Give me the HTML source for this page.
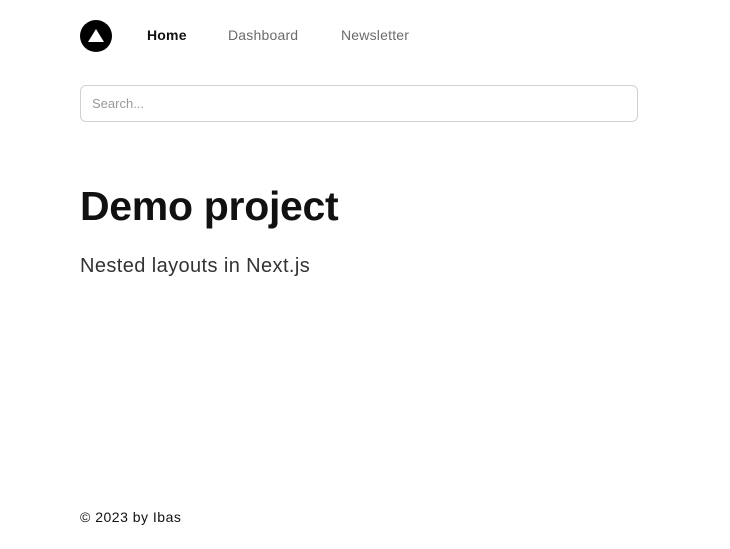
<!DOCTYPE html><html><head><style>
body{margin:0;width:730px;height:549px;background:#fff;font-family:"Liberation Sans",sans-serif;position:relative;overflow:hidden}
.logo{position:absolute;left:80px;top:20px;width:32px;height:32px;border-radius:50%;background:#000}
.nav{position:absolute;top:27px;font-size:14px;color:#6b6b6b;letter-spacing:0.2px}
.search{position:absolute;left:80px;top:85px;width:556px;height:35px;border:1px solid #d1d1d1;border-radius:6px;box-sizing:content-box}
.search span{position:absolute;left:11px;top:10px;font-size:13px;color:#999}
h1{position:absolute;left:80px;top:183px;margin:0;font-size:41px;font-weight:bold;color:#111;letter-spacing:-0.3px}
.sub{position:absolute;left:80px;top:255px;font-size:20px;color:#333;letter-spacing:0.4px}
.foot{position:absolute;left:80px;top:509px;font-size:14px;color:#111;letter-spacing:0.5px}
</style></head><body>
<div class="logo"><svg width="32" height="32"><polygon points="16,9 24,22 8,22" fill="#fff"/></svg></div>
<div class="nav" style="left:147px;color:#111;font-weight:bold">Home</div>
<div class="nav" style="left:228px">Dashboard</div>
<div class="nav" style="left:341px">Newsletter</div>
<div class="search"><span>Search...</span></div>
<h1>Demo project</h1>
<div class="sub">Nested layouts in Next.js</div>
<div class="foot">© 2023 by Ibas</div>
</body></html>
